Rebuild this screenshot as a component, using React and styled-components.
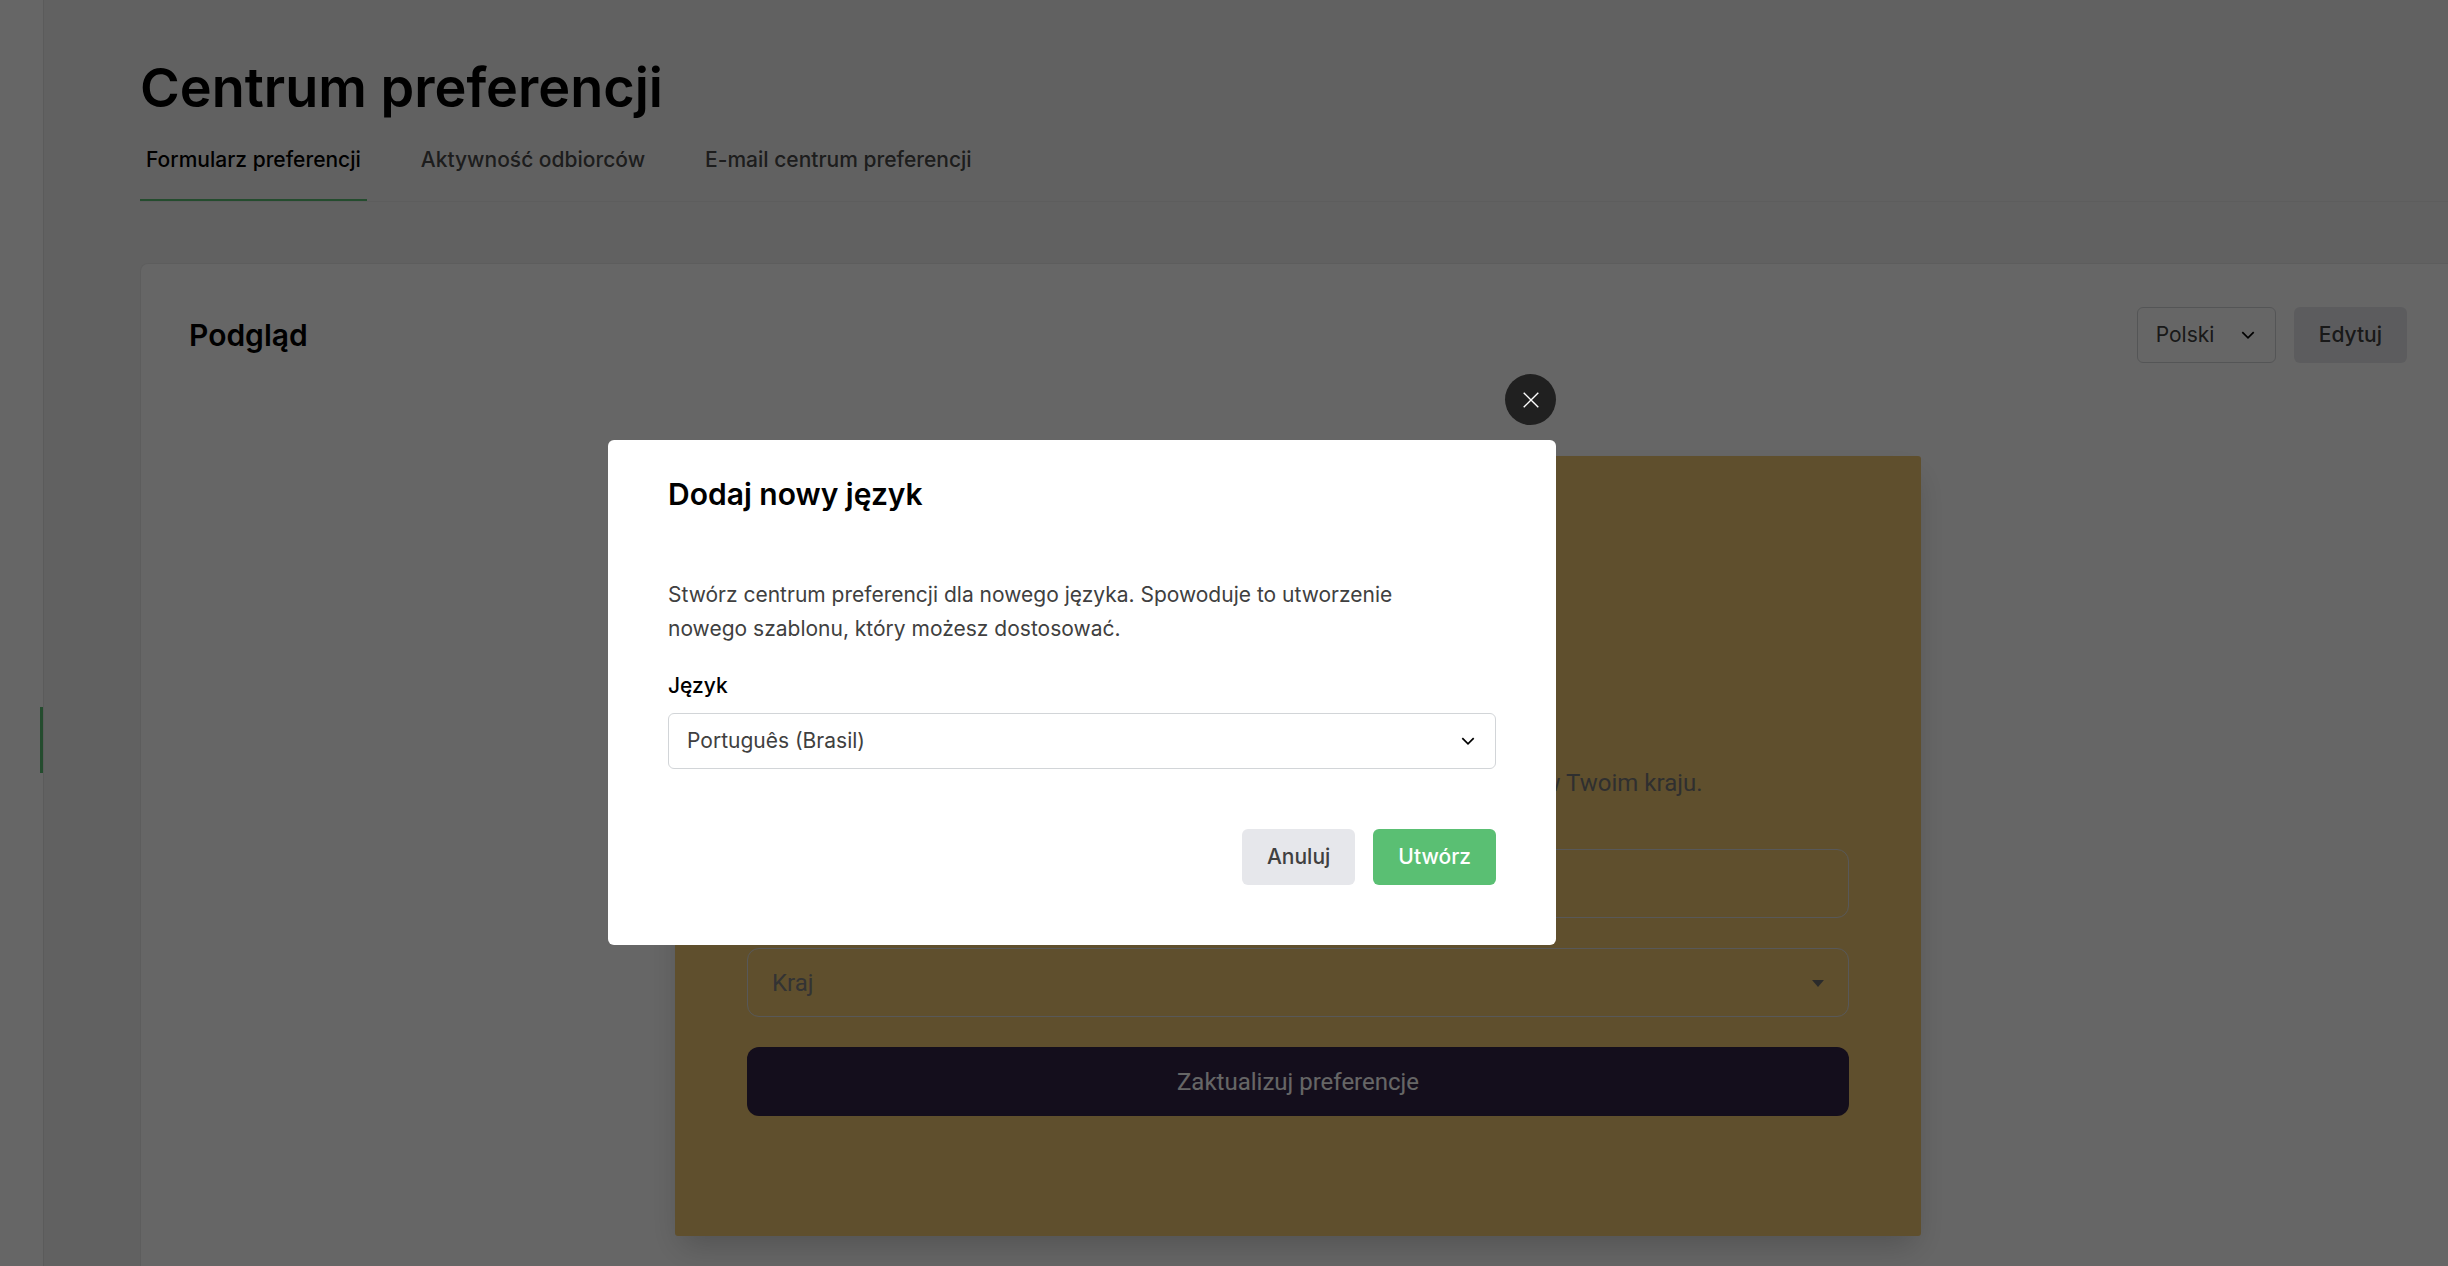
import React, { useState } from "react";
import styled, { createGlobalStyle } from "styled-components";

const TABS = ["Formularz preferencji", "Aktywność odbiorców", "E-mail centrum preferencji"];

function Chevron() {
    return (
        <ChevronIcon viewBox="0 0 14 14" aria-hidden="true">
            <path d="M1.3 4.2 L7 9.8 L12.7 4.2" />
        </ChevronIcon>
    );
}

function SelectBox({ id, label, options, value, onChange }) {
    return (
        <SelectWrap>
            <Select id={id} aria-label={label} value={value} onChange={(e) => onChange(e.target.value)}>
                { options.map((option) => <option key={option}>{option}</option>) }
            </Select>
            <Chevron />
        </SelectWrap>
    );
}

function PreferenceForm() {
    return (
        <Form onSubmit={(e) => e.preventDefault()}>
            <FormText>Zaktualizuj swoje preferencje, aby dostawać oferty dostępne w Twoim kraju.</FormText>
            <FormInput type="text" aria-label="Imię" />
            <CountryWrap>
                <CountrySelect aria-label="Kraj" defaultValue="Kraj">
                    <option>Kraj</option>
                </CountrySelect>
                <Caret viewBox="0 0 12 7" aria-hidden="true">
                    <path d="M0 0 H12 L6 7 Z" />
                </Caret>
            </CountryWrap>
            <SubmitButton type="submit">Zaktualizuj preferencje</SubmitButton>
        </Form>
    );
}

function LanguageModal({ onClose }) {
    const [language, setLanguage] = useState("Português (Brasil)");

    return (
        <Overlay>
            <ModalWrap>
                <CloseButton type="button" aria-label="Zamknij" onClick={onClose}>
                    <svg viewBox="0 0 16 16" aria-hidden="true">
                        <path d="M0.7 0.7 L15.3 15.3 M15.3 0.7 L0.7 15.3" />
                    </svg>
                </CloseButton>
                <Modal role="dialog" aria-modal="true" aria-labelledby="modal-title">
                    <Heading id="modal-title">Dodaj nowy język</Heading>
                    <ModalText>
                        Stwórz centrum preferencji dla nowego języka. Spowoduje to utworzenie
                        nowego szablonu, który możesz dostosować.
                    </ModalText>
                    <Label htmlFor="language">Język</Label>
                    <SelectBox
                        id="language"
                        options={["Português (Brasil)"]}
                        value={language}
                        onChange={setLanguage} />
                    <Actions>
                        <Button type="button" onClick={onClose}>Anuluj</Button>
                        <Button type="button" $primary>Utwórz</Button>
                    </Actions>
                </Modal>
            </ModalWrap>
        </Overlay>
    );
}

export default function App() {
    const [modal, setModal] = useState(true);
    const [tab, setTab] = useState(TABS[0]);
    const [preview, setPreview] = useState("Polski");

    return (
        <>
            <GlobalStyle />
            <Layout>
                <Sidebar>
                    <ActiveMark />
                </Sidebar>
                <Main>
                    <Title>Centrum preferencji</Title>
                    <Tabs>
                        { TABS.map((name) => (
                            <Tab key={name} type="button" $active={name === tab} onClick={() => setTab(name)}>
                                {name}
                            </Tab>
                        )) }
                    </Tabs>
                    <Card>
                        <CardHeader>
                            <Heading>Podgląd</Heading>
                            <Actions>
                                <SelectBox
                                    label="Język podglądu"
                                    options={["Polski"]}
                                    value={preview}
                                    onChange={setPreview} />
                                <Button type="button">Edytuj</Button>
                            </Actions>
                        </CardHeader>
                        <PreferenceForm />
                    </Card>
                </Main>
            </Layout>
            { modal && <LanguageModal onClose={() => setModal(false)} /> }
        </>
    );
}

const GlobalStyle = createGlobalStyle`
    * {
        box-sizing: border-box;
    }

    body {
        margin: 0;
        background-color: #f3f3f3;
        font-family: Inter, "Liberation Sans", sans-serif;
        font-size: 21px;
        line-height: 34px;
        color: #404040;
        overflow: hidden;
    }

    h1, h2, p {
        margin: 0;
    }

    button, input, select {
        font: inherit;
        color: inherit;
    }

    button {
        border: 0;
        cursor: pointer;
    }
`;

const Layout = styled.div`
    display: flex;
    height: 100vh;
    overflow: hidden;
`;

const Sidebar = styled.aside`
    flex: 0 0 44px;
    display: flex;
    flex-direction: column;
    align-items: flex-end;
    padding-top: 707px;
    background-color: #fff;
    border-right: 1px solid #e4e4e4;
`;

const ActiveMark = styled.div`
    width: 3px;
    height: 66px;
    background-color: #5abf73;
`;

const Main = styled.main`
    flex: 1;
    min-width: 0;
    padding: 54px 0 0 96px;
`;

const Title = styled.h1`
    font-size: 54px;
    line-height: 68px;
    font-weight: 600;
    color: #000;
`;

const Tabs = styled.nav`
    display: flex;
    gap: 48px;
    margin: 21px 0 61px;
    border-bottom: 1px solid #e9e9e9;
`;

const Tab = styled.button`
    padding: 0 6px 22px;
    background: none;
    border-bottom: 2px solid ${({ $active }) => ($active ? "#5abf73" : "transparent")};
    font-weight: 500;
    color: ${({ $active }) => ($active ? "#000" : "#4a4a4a")};
`;

const Card = styled.section`
    padding: 43px 41px 160px 48px;
    background-color: #fff;
    border: 1px solid #e9e9e9;
    border-right: 0;
    border-top-left-radius: 8px;
`;

const CardHeader = styled.header`
    display: flex;
    align-items: center;
    justify-content: space-between;
`;

const Heading = styled.h2`
    font-size: 30px;
    line-height: 40px;
    font-weight: 600;
    color: #000;
`;

const Actions = styled.div`
    display: flex;
    justify-content: flex-end;
    gap: 18px;
`;

const SelectWrap = styled.div`
    position: relative;
`;

const Select = styled.select`
    appearance: none;
    width: 100%;
    min-width: 139px;
    height: 56px;
    padding: 0 48px 0 18px;
    background-color: #fff;
    border: 1px solid #d2d5d8;
    border-radius: 6px;
`;

const ChevronIcon = styled.svg`
    position: absolute;
    top: 21px;
    right: 21px;
    width: 14px;
    height: 14px;
    fill: none;
    stroke: #000;
    stroke-width: 1.7;
    pointer-events: none;
`;

const Button = styled.button`
    height: 56px;
    padding: 0 25px;
    border-radius: 6px;
    background-color: ${({ $primary }) => ($primary ? "#5abf73" : "#e6e7eb")};
    color: ${({ $primary }) => ($primary ? "#fff" : "#404040")};
    font-weight: 500;
`;

const Form = styled.form`
    display: flex;
    flex-direction: column;
    gap: 30px;
    width: 48%;
    min-width: 1246px;
    margin: 93px auto 0;
    padding: 310px 72px 120px;
    background-color: #eec671;
    border-radius: 3px;
    box-shadow: 0 15px 30px -6px rgba(0, 0, 0, .2);
    font-family: Roboto, "Liberation Sans", sans-serif;
    font-size: 24px;
`;

const FormText = styled.p`
    margin-bottom: 19px;
    text-align: center;
    white-space: nowrap;
    color: #777;
`;

const FormInput = styled.input`
    height: 69px;
    padding: 0 24px;
    background: none;
    border: 1px solid #dcdcdc;
    border-radius: 12px;
`;

const CountryWrap = styled.div`
    position: relative;
`;

const CountrySelect = styled.select`
    appearance: none;
    display: block;
    width: 100%;
    height: 69px;
    padding: 0 24px;
    background: none;
    border: 1px solid #dcdcdc;
    border-radius: 12px;
    color: #808080;
`;

const Caret = styled.svg`
    position: absolute;
    top: 32px;
    right: 25px;
    width: 12px;
    height: 7px;
    fill: #6c6c6c;
    pointer-events: none;
`;

const SubmitButton = styled.button`
    height: 69px;
    border-radius: 12px;
    background-color: #322346;
    color: #fff;
`;

const Overlay = styled.div`
    position: fixed;
    inset: 0;
    display: flex;
    justify-content: center;
    align-items: flex-start;
    padding: 374px 284px 0 0;
    background-color: rgba(0, 0, 0, .6);
`;

const ModalWrap = styled.div`
    display: flex;
    flex-direction: column;
    align-items: flex-end;
    gap: 15px;
    width: 948px;
`;

const CloseButton = styled.button`
    display: grid;
    place-items: center;
    width: 51px;
    height: 51px;
    padding: 0;
    border-radius: 50%;
    background-color: #202020;

    & svg {
        width: 16px;
        height: 16px;
        fill: none;
        stroke: #fff;
        stroke-width: 1.4;
    }
`;

const Modal = styled.section`
    width: 100%;
    padding: 34px 60px 60px;
    background-color: #fff;
    border-radius: 6px;

    & ${Actions} {
        margin-top: 60px;
    }
`;

const ModalText = styled.p`
    max-width: 780px;
    margin: 64px 0 23px;
`;

const Label = styled.label`
    display: block;
    margin-bottom: 10px;
    font-weight: 500;
    color: #000;
`;
